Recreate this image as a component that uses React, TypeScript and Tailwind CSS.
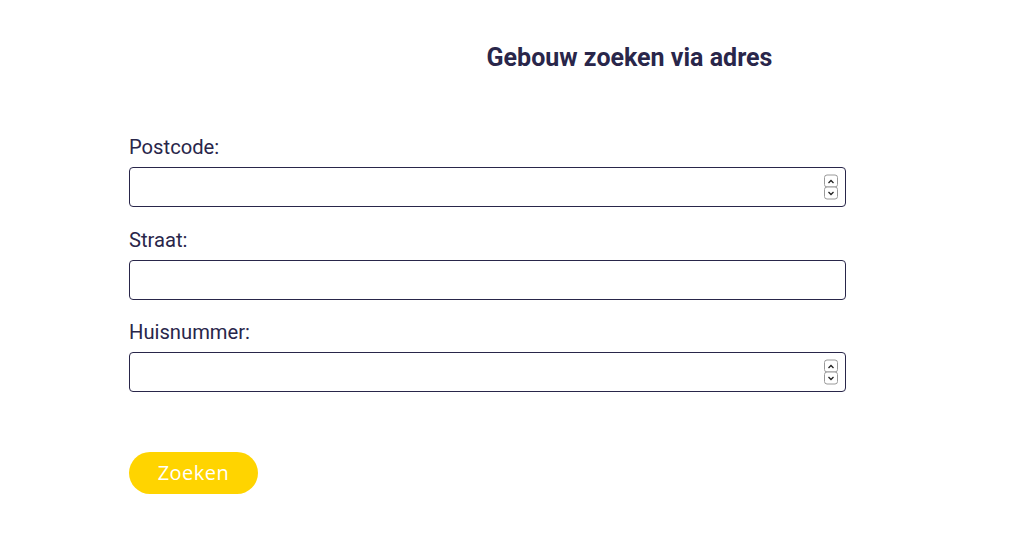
function Spinner() {
  return (
    <div className="pointer-events-none absolute right-[8px] top-1/2 -translate-y-1/2 flex flex-col">
      <span className="flex h-[13px] w-[14px] items-center justify-center rounded-[3px] border border-[#9a9a9a] bg-white">
        <svg width="8" height="6" viewBox="0 0 8 6" fill="none">
          <path d="M1.5 4.5 L4 2 L6.5 4.5" stroke="#222" strokeWidth="1.3" />
        </svg>
      </span>
      <span className="-mt-px flex h-[13px] w-[14px] items-center justify-center rounded-[3px] border border-[#9a9a9a] bg-white">
        <svg width="8" height="6" viewBox="0 0 8 6" fill="none">
          <path d="M1.5 1.5 L4 4 L6.5 1.5" stroke="#222" strokeWidth="1.3" />
        </svg>
      </span>
    </div>
  );
}

export default function App() {
  const fields = [
    { label: "Postcode:", type: "number", gap: "mb-[19px]" },
    { label: "Straat:", type: "text", gap: "mb-[18px]" },
    { label: "Huisnummer:", type: "number", gap: "mb-[19px]" },
  ];

  return (
    <div className="min-h-[546px] bg-white pt-[42px] font-['Roboto',sans-serif] text-[#29264a]">
      <h1 className="pl-[250px] text-center text-[25px] font-bold leading-8">Gebouw zoeken via adres</h1>

      <form className="mt-[59px] w-[717px] ml-[129px]" onSubmit={(e) => e.preventDefault()}>
        {fields.map((f) => (
          <div key={f.label} className={f.gap}>
            <label className="block mb-1.5 text-[20.2px] leading-7">{f.label}</label>
            <div className="relative">
              <input
                type={f.type}
                className="block w-full h-10 rounded-[4px] border border-[#29264a] bg-white px-3 text-base outline-none"
              />
              {f.type === "number" && <Spinner />}
            </div>
          </div>
        ))}

        <button
          type="submit"
          className="mt-[41px] h-[42px] w-[129px] rounded-full bg-[#ffd400] text-xl tracking-wide text-white font-['Open_Sans',sans-serif]"
        >
          Zoeken
        </button>
      </form>
    </div>
  );
}
